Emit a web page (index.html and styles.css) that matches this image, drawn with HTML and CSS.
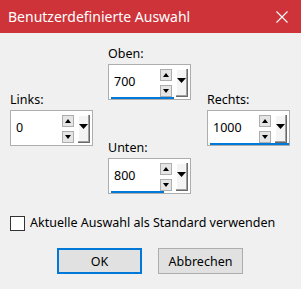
FILE: index.html
```html
<!DOCTYPE html>
<html>
<head>
    <title>Benutzerdefinierte Auswahl</title>
    <link rel="stylesheet" href="styles.css">
</head>
<body>
    <div class="window">
        <div class="titlebar">
            <span class="title">Benutzerdefinierte Auswahl</span>
            <svg class="close" width="12" height="12" viewBox="0 0 12 12">
                <path d="M0.5 0.5 L11.5 11.5 M11.5 0.5 L0.5 11.5" stroke="#fff" stroke-width="1.1" fill="none"/>
            </svg>
        </div>
        <div class="content">
            <div class="fields">
                <div class="col col-side">
                    <div class="field">
                        <div class="label">Links:</div>
                        <div class="spinbox">
                            <div class="spin-row">
                                <span class="value">0</span>
                                <div class="arrows"><span class="arrow up"></span><span class="arrow down"></span></div>
                                <div class="drop"><svg width="9" height="5" viewBox="0 0 9 5"><path d="M0 0 H9 L4.5 5 Z" fill="#000"/></svg></div>
                            </div>
                            <div class="bar" style="width: 0px"></div>
                        </div>
                    </div>
                </div>
                <div class="col col-mid">
                    <div class="field">
                        <div class="label">Oben:</div>
                        <div class="spinbox">
                            <div class="spin-row">
                                <span class="value">700</span>
                                <div class="arrows"><span class="arrow up"></span><span class="arrow down"></span></div>
                                <div class="drop"><svg width="9" height="5" viewBox="0 0 9 5"><path d="M0 0 H9 L4.5 5 Z" fill="#000"/></svg></div>
                            </div>
                            <div class="bar" style="width: 63px"></div>
                        </div>
                    </div>
                    <div class="field">
                        <div class="label">Unten:</div>
                        <div class="spinbox">
                            <div class="spin-row">
                                <span class="value">800</span>
                                <div class="arrows"><span class="arrow up"></span><span class="arrow down"></span></div>
                                <div class="drop"><svg width="9" height="5" viewBox="0 0 9 5"><path d="M0 0 H9 L4.5 5 Z" fill="#000"/></svg></div>
                            </div>
                            <div class="bar" style="width: 53px"></div>
                        </div>
                    </div>
                </div>
                <div class="col col-side">
                    <div class="field">
                        <div class="label">Rechts:</div>
                        <div class="spinbox">
                            <div class="spin-row">
                                <span class="value">1000</span>
                                <div class="arrows"><span class="arrow up"></span><span class="arrow down"></span></div>
                                <div class="drop"><svg width="9" height="5" viewBox="0 0 9 5"><path d="M0 0 H9 L4.5 5 Z" fill="#000"/></svg></div>
                            </div>
                            <div class="bar" style="width: 79px"></div>
                        </div>
                    </div>
                </div>
            </div>
            <label class="check"><span class="checkbox"></span>Aktuelle Auswahl als Standard verwenden</label>
            <div class="buttons">
                <button class="btn btn-default">OK</button>
                <button class="btn">Abbrechen</button>
            </div>
        </div>
    </div>
</body>
</html>
```

FILE: styles.css
```css
body {
    margin: 0;
    background-color: #f0f0f0;
    font-family: "Noto Sans", "Open Sans", sans-serif;
    color: #000;
}
.window {
    width: 301px;
    height: 289px;
}
.titlebar {
    height: 33px;
    background-color: #ce3339;
    display: flex;
    align-items: center;
    justify-content: space-between;
    padding: 0 13px 0 8px;
}
.title {
    color: #fff;
    font-size: 14px;
    margin-top: -1px;
}
.close {
    display: block;
}
.content {
    padding: 13px 0 0 10px;
}
.fields {
    display: grid;
    grid-template-columns: 98px 99px 83px;
}
.col {
    display: flex;
    flex-direction: column;
}
.col-side {
    padding-top: 46px;
}
.col-mid {
    gap: 40px;
}
.label {
    font-size: 12.5px;
    line-height: 16px;
    height: 16px;
    margin-bottom: 2px;
}
.spinbox {
    width: 81px;
    height: 34px;
    border: 1px solid #adadad;
    background-color: #fff;
    display: flex;
    flex-direction: column;
}
.spin-row {
    display: flex;
    align-items: flex-start;
    height: 29px;
    padding: 3px 2px 0 5px;
}
.value {
    flex: 1;
    font-size: 12.5px;
    line-height: 28px;
}
.arrows {
    display: flex;
    flex-direction: column;
    gap: 4px;
    margin-top: 1px;
}
.arrow {
    position: relative;
    width: 10px;
    height: 10px;
    border: 1px solid #adadad;
    background-color: #e5e5e5;
}
.arrow::after {
    content: "";
    position: absolute;
    left: 2px;
    border-left: 3px solid transparent;
    border-right: 3px solid transparent;
}
.arrow.up::after {
    top: 3px;
    border-bottom: 4px solid #000;
}
.arrow.down::after {
    top: 3px;
    border-top: 4px solid #000;
}
.drop {
    width: 12px;
    height: 28px;
    margin: 1px 0 0 4px;
    background-color: #f4f4f4;
    border-right: 1px solid #6a6a6a;
    border-bottom: 1px solid #6a6a6a;
    box-shadow: inset -1px -1px 0 #a0a0a0, inset 1px 1px 0 #fff;
    box-sizing: border-box;
    padding-top: 9px;
}
.drop svg {
    display: block;
    margin-left: 1px;
}
.bar {
    height: 3px;
    margin-left: 2px;
    background-color: #0078d7;
}
.check {
    display: flex;
    align-items: center;
    margin-top: 21px;
    font-size: 12.5px;
    line-height: 16px;
}
.checkbox {
    width: 13px;
    height: 13px;
    border: 1px solid #333;
    background-color: #fff;
    margin-right: 5px;
}
.buttons {
    display: flex;
    gap: 16px;
    margin: 17px 0 0 47px;
}
.btn {
    width: 85px;
    height: 26px;
    border: 1px solid #adadad;
    background-color: #e1e1e1;
    font-family: "Noto Sans", "Open Sans", sans-serif;
    font-size: 12.5px;
    color: #000;
    padding: 0;
}
.btn-default {
    border: 2px solid #0078d7;
}
```
